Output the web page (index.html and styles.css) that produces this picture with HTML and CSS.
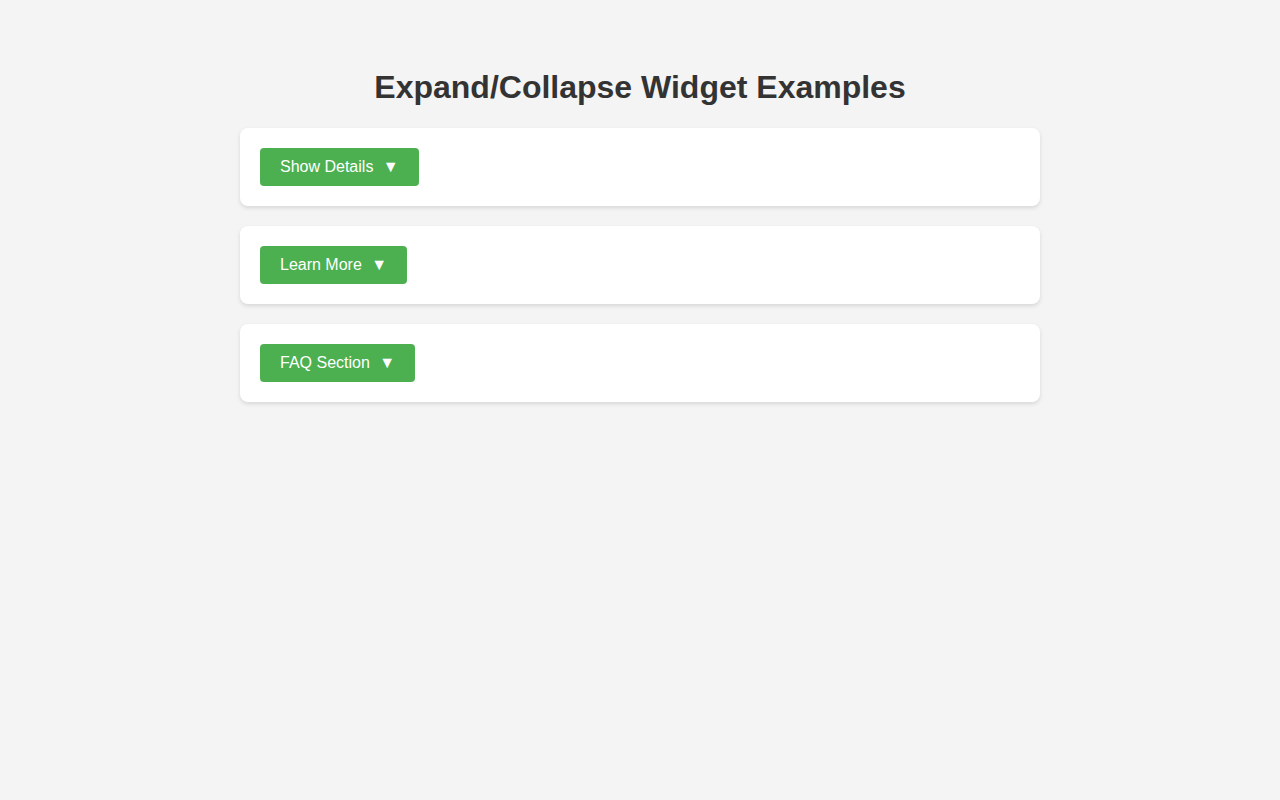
FILE: index.html
```html
<!DOCTYPE html>
<html lang="en">
<head>
<meta charset="utf-8">
<title>Expand/Collapse Widget Examples</title>
<link rel="stylesheet" href="styles.css">
</head>
<body>
<main class="container">
  <h1 class="title">Expand/Collapse Widget Examples</h1>
  <section class="card">
    <button class="toggle">Show Details <span class="arrow">▼</span></button>
  </section>
  <section class="card">
    <button class="toggle">Learn More <span class="arrow">▼</span></button>
  </section>
  <section class="card">
    <button class="toggle">FAQ Section <span class="arrow">▼</span></button>
  </section>
</main>
</body>
</html>
```

FILE: styles.css
```css
html, body {
  margin: 0;
  padding: 0;
}
body {
  background: #f4f4f4;
  font-family: "Liberation Sans", Arial, sans-serif;
  color: #333;
  min-height: 800px;
}
.container {
  width: 800px;
  margin: 0 auto;
  padding-top: 48px;
  display: flex;
  flex-direction: column;
  gap: 20px;
}
.title {
  margin: 21px 0 2px;
  font-size: 32px;
  line-height: 37px;
  font-weight: bold;
  text-align: center;
  color: #333;
}
.card {
  background: #fff;
  border-radius: 8px;
  box-shadow: 0 2px 4px rgba(0, 0, 0, 0.12);
  padding: 20px;
  display: flex;
}
.toggle {
  background: #4caf50;
  color: #fff;
  border: none;
  border-radius: 4px;
  padding: 10px 20px;
  font-family: "Liberation Sans", Arial, sans-serif;
  font-size: 16px;
  line-height: 18px;
  cursor: pointer;
}
.arrow {
  margin-left: 5px;
}
```
